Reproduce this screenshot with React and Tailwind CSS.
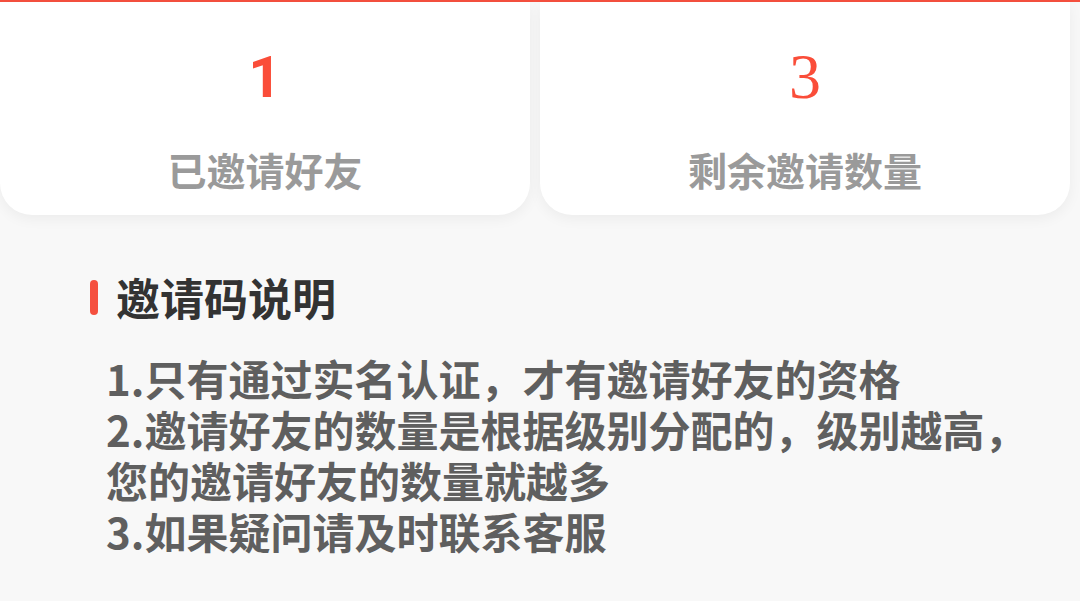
const cjk = '"Noto Sans CJK SC", "Noto Sans", sans-serif';

const stats = [
  { value: '1', label: '已邀请好友', serif: false },
  { value: '3', label: '剩余邀请数量', serif: true },
];

const rules = [
  '1.只有通过实名认证，才有邀请好友的资格',
  '2.邀请好友的数量是根据级别分配的，级别越高，',
  '您的邀请好友的数量就越多',
  '3.如果疑问请及时联系客服',
];

export default function App() {
  return (
    <div className="w-[1080px] h-[601px] overflow-hidden bg-[#f8f8f8]" style={{ fontFamily: cjk }}>
      <div className="h-[2px] bg-[#f5503f]" />
      <div className="flex gap-[10px]">
        {stats.map((s) => (
          <div
            key={s.label}
            className="w-[530px] h-[213px] bg-white rounded-b-[32px] shadow-[0_4px_14px_rgba(0,0,0,0.05)] flex flex-col items-center"
          >
            <div
              className={`mt-[40px] h-[70px] flex items-center leading-none text-[#fa4d39] ${s.serif ? 'text-[64px]' : 'text-[58px]'}`}
              style={{ fontFamily: s.serif ? '"Liberation Serif", serif' : 'Roboto, sans-serif', fontWeight: s.serif ? 400 : 700 }}
            >
              {s.value}
            </div>
            <div className="mt-[38px] text-[39px] leading-none font-bold text-[#9a9a9a]">{s.label}</div>
          </div>
        ))}
      </div>

      <div className="mt-[60px] ml-[90px] flex items-center gap-[18px]">
        <div className="w-[8px] h-[35px] rounded-full bg-[#f5503f]" />
        <div className="text-[44px] leading-none font-bold text-[#333333]">邀请码说明</div>
      </div>

      <div className="mt-[33px] ml-[106px] text-[42px] leading-[51px] font-bold text-[#5f5f5f]">
        {rules.map((r) => (
          <div key={r}>{r}</div>
        ))}
      </div>
    </div>
  );
}
